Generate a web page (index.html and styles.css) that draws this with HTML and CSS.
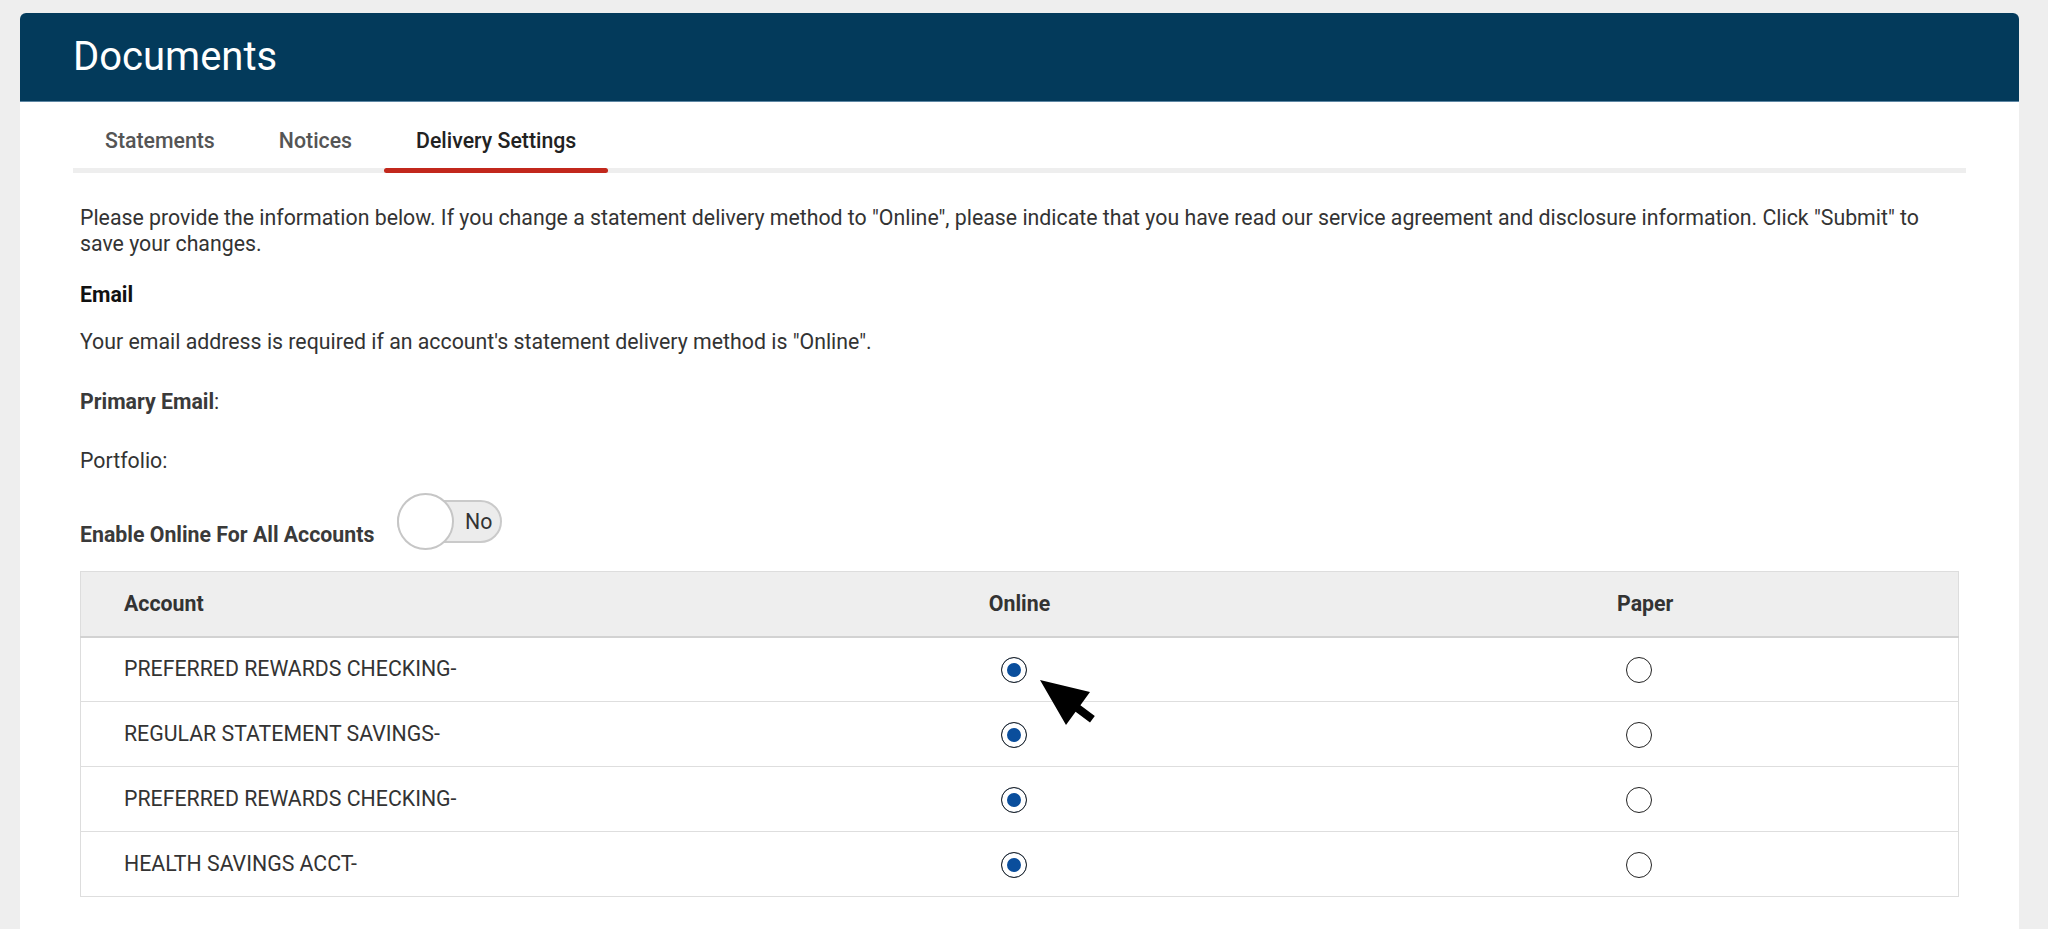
FILE: index.html
```html
<!DOCTYPE html>
<html lang="en">
<head>
    <meta charset="UTF-8">
    <meta name="viewport" content="width=device-width, initial-scale=1.0">
    <title>Documents :: Delivery Settings</title>
    <link rel="stylesheet" href="styles.css">
</head>
<body>
    <div class="card">
        <header class="card-header">
            <h1>Documents</h1>
        </header>

        <nav class="tabs">
            <a class="tab">Statements</a>
            <a class="tab">Notices</a>
            <a class="tab active">Delivery Settings</a>
        </nav>

        <div class="content">
            <p class="intro">Please provide the information below. If you change a statement delivery method to "Online", please indicate that you have read our service agreement and disclosure information. Click "Submit" to save your changes.</p>

            <p class="email-title">Email</p>
            <p class="email-note">Your email address is required if an account's statement delivery method is "Online".</p>

            <p class="primary"><strong>Primary Email</strong>:</p>
            <p class="portfolio">Portfolio:</p>

            <div class="enable-row">
                <span class="enable-label">Enable Online For All Accounts</span>
                <div class="toggle">
                    <span class="knob"></span>
                    <span class="toggle-text">No</span>
                </div>
            </div>

            <div class="table-wrap">
                <table class="accounts">
                    <thead>
                        <tr>
                            <th class="col-account">Account</th>
                            <th>Online</th>
                            <th>Paper</th>
                        </tr>
                    </thead>
                    <tbody>
                        <tr>
                            <td class="col-account">PREFERRED REWARDS CHECKING-</td>
                            <td><input type="radio" name="acct1" checked></td>
                            <td><input type="radio" name="acct1"></td>
                        </tr>
                        <tr>
                            <td class="col-account">REGULAR STATEMENT SAVINGS-</td>
                            <td><input type="radio" name="acct2" checked></td>
                            <td><input type="radio" name="acct2"></td>
                        </tr>
                        <tr>
                            <td class="col-account">PREFERRED REWARDS CHECKING-</td>
                            <td><input type="radio" name="acct3" checked></td>
                            <td><input type="radio" name="acct3"></td>
                        </tr>
                        <tr>
                            <td class="col-account">HEALTH SAVINGS ACCT-</td>
                            <td><input type="radio" name="acct4" checked></td>
                            <td><input type="radio" name="acct4"></td>
                        </tr>
                    </tbody>
                </table>

                <svg class="pointer" width="56" height="46" viewBox="0 0 56 46">
                    <polygon points="0,0 50,12 40.4,25.3 54.8,36.1 50,42.5 35.6,31.7 26,45" fill="#000"/>
                </svg>
            </div>
        </div>
    </div>
</body>
</html>
```

FILE: styles.css
```css
* {
    box-sizing: border-box;
    margin: 0;
    padding: 0;
}

body {
    font-family: Roboto, "Liberation Sans", Arial, sans-serif;
    font-size: 21.3px;
    line-height: 26px;
    color: #333;
    background-color: #eeeeee;
    min-height: 929px;
    overflow: hidden;
}

.card {
    margin: 13px 29px 0 20px;
    background-color: #fff;
    border-radius: 6px 6px 0 0;
    min-height: 916px;
}

.card-header {
    height: 89px;
    background-color: #033a5b;
    border-radius: 6px 6px 0 0;
    border-bottom: 1px solid #5d86a3;
    display: flex;
    align-items: center;
    padding: 0 53px;
}

.card-header h1 {
    color: #fff;
    font-size: 40px;
    font-weight: 400;
    line-height: 44px;
}

.tabs {
    display: flex;
    margin: 0 53px;
    padding-top: 26px;
    border-bottom: 5px solid #eeeeee;
}

.tab {
    position: relative;
    padding: 0 32px 14px;
    font-weight: 500;
    color: #555;
    cursor: pointer;
}

.tab.active {
    color: #222;
}

.tab.active::after {
    content: "";
    position: absolute;
    left: 0;
    right: 0;
    bottom: -5px;
    height: 5px;
    border-radius: 3px;
    background-color: #c2281c;
}

.content {
    padding: 32px 60px 0;
}

.email-title {
    margin-top: 25px;
    font-weight: 700;
    color: #111;
}

.email-note {
    margin-top: 21px;
}

.primary {
    margin-top: 34px;
}

.primary strong {
    font-weight: 700;
    color: #3a3a3a;
}

.portfolio {
    margin-top: 33px;
}

.enable-row {
    display: flex;
    align-items: center;
    gap: 23px;
    margin-top: 19px;
}

.enable-label {
    align-self: flex-end;
    margin-bottom: 2px;
    font-weight: 700;
    color: #3a3a3a;
}

.toggle {
    position: relative;
    width: 105px;
    height: 43px;
    margin: 7px 0;
    border: 2px solid #cacaca;
    border-radius: 22px;
    background-color: #ececec;
    display: flex;
    align-items: center;
    justify-content: flex-end;
    padding-right: 8px;
}

.knob {
    position: absolute;
    left: -2px;
    top: 50%;
    width: 57px;
    height: 57px;
    margin-top: -28.5px;
    border: 2px solid #c6c6c6;
    border-radius: 50%;
    background-color: #fff;
}

.toggle-text {
    color: #333;
}

.table-wrap {
    position: relative;
    margin-top: 21px;
}

.accounts {
    width: 100%;
    table-layout: fixed;
    border-collapse: collapse;
    border: 1px solid #dddddd;
}

.accounts th {
    height: 65px;
    background-color: #eeeeee;
    border-bottom: 2px solid #d2d2d2;
    font-weight: 700;
    color: #333;
    text-align: center;
}

.accounts td {
    height: 65px;
    border-bottom: 1px solid #dedede;
    text-align: center;
    vertical-align: middle;
}

.accounts .col-account {
    text-align: left;
    padding-left: 43px;
}

.accounts input[type="radio"] {
    appearance: none;
    -webkit-appearance: none;
    display: inline-block;
    vertical-align: middle;
    width: 26px;
    height: 26px;
    margin: 0 12px 0 0;
    border: 1.5px solid #222;
    border-radius: 50%;
    background-color: #fff;
}

.accounts input[type="radio"]:checked {
    background-color: #0a4e9c;
    box-shadow: inset 0 0 0 5px #fff;
}

.pointer {
    position: absolute;
    left: 960px;
    top: 109px;
}
```
